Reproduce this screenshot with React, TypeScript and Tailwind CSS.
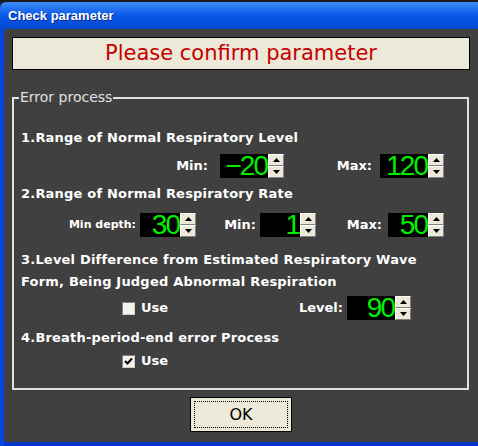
import React from 'react';

const sans = "font-['DejaVu_Sans',sans-serif]";

const Spin = () => (
  <div className="flex flex-col w-[16px] h-[24px]">
    {[0, 1].map((i) => (
      <div
        key={i}
        className="flex-1 flex items-center justify-center bg-[#ece9d8] border border-t-white border-l-white border-r-[#808080] border-b-[#808080]"
      >
        <svg width="7" height="4" viewBox="0 0 7 4">
          {i === 0 ? <polygon points="3.5,0 7,4 0,4" fill="#000" /> : <polygon points="0,0 7,0 3.5,4" fill="#000" />}
        </svg>
      </div>
    ))}
  </div>
);

const NumBox = ({ value, width }: { value: string; width: string }) => (
  <div className="flex">
    <div
      className={`${width} h-[24px] bg-black text-[#00ee00] text-right pr-[1px] font-['Liberation_Sans',sans-serif] text-[28px] leading-[24px] tracking-[-2px]`}
    >
      {value}
    </div>
    <Spin />
  </div>
);

const Label = ({ text, width, size = 'text-[13px]' }: { text: string; width: string; size?: string }) => (
  <span className={`${width} text-right text-white font-bold ${size} ${sans}`}>{text}</span>
);

const Check = ({ checked }: { checked?: boolean }) => (
  <span className="w-[13px] h-[13px] bg-[#f4f3ee] border border-t-[#808080] border-l-[#808080] border-r-[#d4d0c8] border-b-[#d4d0c8] flex items-center justify-center">
    {checked && (
      <svg width="9" height="9" viewBox="0 0 9 9">
        <path d="M1 4 L3.5 6.5 L8 1.5" stroke="#000" strokeWidth="2" fill="none" />
      </svg>
    )}
  </span>
);

const Title = ({ children }: { children: React.ReactNode }) => (
  <div className={`pl-[7px] text-white font-bold text-[13px] leading-[22px] tracking-[0.2px] ${sans}`}>{children}</div>
);

export default function App() {
  return (
    <div className="w-[478px] h-[446px] bg-[#202020] overflow-hidden flex flex-col">
      <div className="h-[2px] bg-[#1a1a1a]" />
      <div className="h-[28px] bg-gradient-to-b from-[#3d8af7] via-[#0858e8] to-[#0448d0] flex items-center pl-[8px] rounded-tl-[6px]">
        <span className="text-white font-bold text-[13px] font-['Liberation_Sans',sans-serif] [text-shadow:1px_1px_0_#0a2a80]">
          Check parameter
        </span>
      </div>
      <div className="flex-1 flex bg-[#0a3ad8]">
        <div className="w-[4px] bg-[#0a44e0]" />
        <div className="flex-1 flex flex-col bg-[#404040] pb-[10px] border-b-[4px] border-[#0636c8]">
          <div className="mx-[8px] mt-[8px] h-[33px] bg-[#ece9d8] border border-black flex items-center justify-center">
            <span className={`text-[#c40000] text-[21px] ${sans}`}>Please confirm parameter</span>
          </div>

          <div className="relative mx-[8px] mt-[27px] mr-[9px] h-[293px] border-2 border-[#e4e2d8]">
            <span className={`absolute left-[5px] top-[-10px] px-[1px] bg-[#404040] text-[#e0e0e0] text-[14px] leading-[17px] ${sans}`}>
              Error process
            </span>

            <div className="pt-[28px]">
              <Title>1.Range of Normal Respiratory Level</Title>
              <div className="flex items-center mt-[5px] h-[24px]">
                <Label text="Min:" width="w-[194px]" />
                <div className="ml-[12px]">
                  <NumBox value="−20" width="w-[48px]" />
                </div>
                <Label text="Max:" width="w-[88px]" />
                <div className="ml-[8px]">
                  <NumBox value="120" width="w-[48px]" />
                </div>
              </div>

              <div className="mt-[5px]">
                <Title>2.Range of Normal Respiratory Rate</Title>
              </div>
              <div className="flex items-center mt-[8px] h-[24px]">
                <Label text="Min depth:" width="w-[122px]" size="text-[11px]" />
                <div className="ml-[4px]">
                  <NumBox value="30" width="w-[40px]" />
                </div>
                <Label text="Min:" width="w-[60px]" />
                <div className="ml-[4px]">
                  <NumBox value="1" width="w-[40px]" />
                </div>
                <Label text="Max:" width="w-[66px]" />
                <div className="ml-[6px]">
                  <NumBox value="50" width="w-[40px]" />
                </div>
              </div>

              <div className="mt-[12px]">
                <Title>
                  3.Level Difference from Estimated Respiratory Wave
                  <br />
                  Form, Being Judged Abnormal Respiration
                </Title>
              </div>
              <div className="flex items-center mt-[3px] h-[24px]">
                <div className="ml-[108px] flex items-center gap-[6px] w-[80px]">
                  <Check />
                  <span className={`text-white font-bold text-[13px] ${sans}`}>Use</span>
                </div>
                <Label text="Level:" width="w-[141px]" />
                <div className="ml-[4px]">
                  <NumBox value="90" width="w-[48px]" />
                </div>
              </div>

              <div className="mt-[7px]">
                <Title>4.Breath-period-end error Process</Title>
              </div>
              <div className="flex items-center h-[24px]">
                <div className="ml-[108px] flex items-center gap-[6px]">
                  <Check checked />
                  <span className={`text-white font-bold text-[13px] ${sans}`}>Use</span>
                </div>
              </div>
            </div>
          </div>

          <div className="flex justify-center mt-[7px]">
            <button className="w-[102px] h-[35px] bg-[#ece9d8] border border-black p-[3px]">
              <div className={`w-full h-full border border-dotted border-black flex items-center justify-center text-black text-[16px] ${sans}`}>
                OK
              </div>
            </button>
          </div>
        </div>
      </div>
    </div>
  );
}
